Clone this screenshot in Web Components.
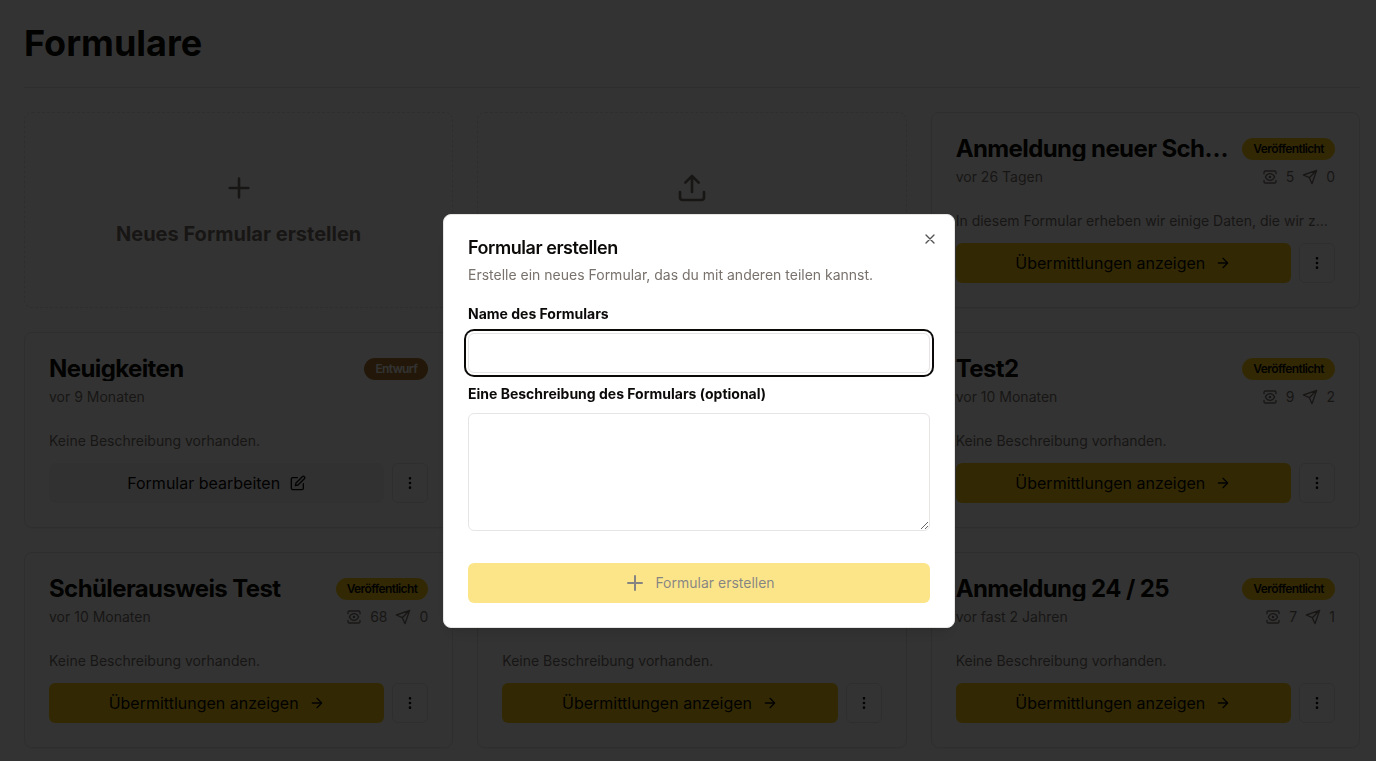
<!DOCTYPE html>
<html lang="de">
<head>
<meta charset="utf-8">
<meta name="viewport" content="width=device-width, initial-scale=1">
<title>Formulare</title>
<style>
    :root{
        --vordergrund:#0c0a09;
        --gedaempft:#78716c;
        --rand:#e7e5e4;
        --primaer:#facc15;
        --radius:6px;
    }
    body{
        margin:0;
        background:white;
        color:var(--vordergrund);
        font-family:Inter, "Liberation Sans", sans-serif;
        font-size:16px;
        line-height:24px;
    }
</style>
</head>
<body>
<formular-seite>
    <aktion-kachel icon="plus">Neues Formular erstellen</aktion-kachel>
    <aktion-kachel icon="upload"></aktion-kachel>
    <formular-karte titel="Anmeldung neuer Schüler" datum="vor 26 Tagen" aufrufe="5" antworten="0">In diesem Formular erheben wir einige Daten, die wir zur Anmeldung brauchen.</formular-karte>
    <formular-karte titel="Neuigkeiten" datum="vor 9 Monaten" entwurf>Keine Beschreibung vorhanden.</formular-karte>
    <leere-karte></leere-karte>
    <formular-karte titel="Test2" datum="vor 10 Monaten" aufrufe="9" antworten="2">Keine Beschreibung vorhanden.</formular-karte>
    <formular-karte titel="Schülerausweis Test" datum="vor 10 Monaten" aufrufe="68" antworten="0">Keine Beschreibung vorhanden.</formular-karte>
    <formular-karte>Keine Beschreibung vorhanden.</formular-karte>
    <formular-karte titel="Anmeldung 24 / 25" datum="vor fast 2 Jahren" aufrufe="7" antworten="1">Keine Beschreibung vorhanden.</formular-karte>
</formular-seite>
<formular-dialog></formular-dialog>

<script>
const ICONS = {
    plus: `<path d="M5 12h14M12 5v14"/>`,
    upload: `<path d="M21 15v4a2 2 0 0 1-2 2H5a2 2 0 0 1-2-2v-4M17 8l-5-5-5 5M12 3v12"/>`,
    pfeil: `<path d="M5 12h14m-7-7 7 7-7 7"/>`,
    punkte: `<g fill="currentColor"><circle cx="12" cy="5" r="1"/><circle cx="12" cy="12" r="1"/><circle cx="12" cy="19" r="1"/></g>`,
    ansicht: `<path d="M5 12s2.5-5 7-5 7 5 7 5-2.5 5-7 5-7-5-7-5z"/><circle cx="12" cy="12" r="1"/><path d="M21 17v2a2 2 0 0 1-2 2H5a2 2 0 0 1-2-2v-2M21 7V5a2 2 0 0 0-2-2H5a2 2 0 0 0-2 2v2"/>`,
    senden: `<path d="m22 2-7 20-4-9-9-4ZM22 2 11 13"/>`,
    bearbeiten: `<path d="M11 4H4a2 2 0 0 0-2 2v14a2 2 0 0 0 2 2h14a2 2 0 0 0 2-2v-7"/><path d="M18.5 2.5a2.12 2.12 0 0 1 3 3L12 15l-4 1 1-4Z"/>`,
    schliessen: `<path d="M18 6 6 18M6 6l12 12"/>`
};

class formIcon extends HTMLElement{
    constructor(){
        super();
        this.attachShadow({ mode: "open" });
    }
    connectedCallback(){
        this.shadowRoot.innerHTML = `
        <style>
        :host{
            display:block;
            flex:none;
            width:16px;
            height:16px;
        }
        svg{
            display:block;
            width:100%;
            height:100%;
        }
        </style>
        <svg viewBox="0 0 24 24" fill="none" stroke="currentColor" stroke-width="2" stroke-linecap="round" stroke-linejoin="round" aria-hidden="true">${ICONS[this.getAttribute("name")]}</svg>
        `
    }
}

class formularSeite extends HTMLElement{
    constructor(){
        super();
        this.attachShadow({ mode: "open" });
        this.shadowRoot.innerHTML = `
        <style>
        :host{
            display:block;
            padding:24px 16px 12px 24px;
        }
        header{
            padding-bottom:24px;
            margin-bottom:24px;
            border-bottom:1px solid var(--rand);
        }
        h1{
            margin:0;
            font-size:36px;
            line-height:39px;
            font-weight:700;
        }
        main{
            display:grid;
            grid-template-columns:repeat(3, minmax(0, 1fr));
            grid-auto-rows:196px;
            gap:24px;
        }
        </style>
        <header><h1>Formulare</h1></header>
        <main><slot></slot></main>
        `
    }
}

class aktionKachel extends HTMLElement{
    constructor(){
        super();
        this.attachShadow({ mode: "open" });
    }
    connectedCallback(){
        this.shadowRoot.innerHTML = `
        <style>
        :host{
            display:grid;
        }
        button{
            display:flex;
            flex-direction:column;
            align-items:center;
            justify-content:center;
            gap:16px;
            border:1px dashed var(--rand);
            border-radius:8px;
            background:none;
            color:var(--gedaempft);
            font:inherit;
            font-size:20px;
            line-height:28px;
            font-weight:700;
        }
        form-icon{
            width:32px;
            height:32px;
        }
        span{
            min-height:28px;
        }
        </style>
        <button type="button">
            <form-icon name="${this.getAttribute("icon")}"></form-icon>
            <span><slot></slot></span>
        </button>
        `
    }
}

class leereKarte extends HTMLElement{
    constructor(){
        super();
        this.attachShadow({ mode: "open" });
        this.shadowRoot.innerHTML = `
        <style>
        :host{
            display:block;
            border:1px solid var(--rand);
            border-radius:8px;
        }
        </style>
        `
    }
}

class formularKarte extends HTMLElement{
    constructor(){
        super();
        this.attachShadow({ mode: "open" });
    }
    connectedCallback(){
        const titel = this.getAttribute("titel");
        const entwurf = this.hasAttribute("entwurf");
        const kopf = titel ? `
            <h2 class="zeile">
                <span class="titel">${titel}</span>
                <span class="badge">${entwurf ? "Entwurf" : "Veröffentlicht"}</span>
            </h2>
            <div class="zeile meta">
                <span>${this.getAttribute("datum")}</span>
                ${entwurf ? "" : `<span class="zahlen">
                    <form-icon name="ansicht"></form-icon>${this.getAttribute("aufrufe")}
                    <form-icon name="senden"></form-icon>${this.getAttribute("antworten")}
                </span>`}
            </div>` : "";
        this.shadowRoot.innerHTML = `
        <style>
        :host{
            display:flex;
            flex-direction:column;
            box-sizing:border-box;
            padding:24px;
            border:1px solid var(--rand);
            border-radius:8px;
            box-shadow:0 1px 2px rgba(0, 0, 0, .05);
        }
        .kopf{
            min-height:50px;
        }
        .zeile{
            display:flex;
            align-items:center;
            justify-content:space-between;
            gap:12px;
        }
        h2{
            margin:0;
            font-size:24px;
            line-height:24px;
            font-weight:700;
            letter-spacing:-0.025em;
        }
        .titel{
            overflow:hidden;
            text-overflow:ellipsis;
            white-space:nowrap;
        }
        .badge{
            flex:none;
            padding:3px 11px;
            border-radius:11px;
            background:${entwurf ? "#a8762a" : "var(--primaer)"};
            color:${entwurf ? "#fafaf9" : "inherit"};
            font-size:12px;
            line-height:16px;
            font-weight:600;
        }
        .meta, p{
            color:var(--gedaempft);
            font-size:14px;
            line-height:20px;
        }
        .meta{
            margin-top:6px;
        }
        .zahlen{
            display:flex;
            align-items:center;
            gap:8px;
        }
        p{
            margin:auto 0 12px;
            overflow:hidden;
            text-overflow:ellipsis;
            white-space:nowrap;
        }
        .aktionen{
            display:flex;
            gap:8px;
        }
        a, button{
            display:flex;
            align-items:center;
            justify-content:center;
            box-sizing:border-box;
            height:40px;
            border-radius:var(--radius);
            color:inherit;
            font:inherit;
        }
        a{
            flex:1;
            gap:10px;
            background:${entwurf ? "#f5f5f4" : "var(--primaer)"};
            text-decoration:none;
        }
        button{
            padding:0 9px;
            border:1px solid var(--rand);
            background:none;
        }
        </style>
        <div class="kopf">${kopf}</div>
        <p><slot></slot></p>
        <div class="aktionen">
            <a href="#">${entwurf ? "Formular bearbeiten" : "Übermittlungen anzeigen"} <form-icon name="${entwurf ? "bearbeiten" : "pfeil"}"></form-icon></a>
            <button type="button" aria-label="Menü"><form-icon name="punkte"></form-icon></button>
        </div>
        `
    }
}

class formularDialog extends HTMLElement{
    constructor(){
        super();
        this.attachShadow({ mode: "open" });
        this.shadowRoot.innerHTML = `
        <style>
        :host{
            position:fixed;
            inset:0;
            display:grid;
            place-items:center;
            padding:81px 0 0 22px;
            background:rgba(0, 0, 0, .8);
        }
        :host([hidden]){
            display:none;
        }
        section{
            position:relative;
            box-sizing:border-box;
            width:100%;
            max-width:512px;
            padding:24px;
            border:1px solid var(--rand);
            border-radius:8px;
            background:white;
            box-shadow:0 10px 15px -3px rgba(0, 0, 0, .1), 0 4px 6px -4px rgba(0, 0, 0, .1);
        }
        h2{
            margin:0 0 8px;
            font-size:18px;
            line-height:18px;
            font-weight:600;
            letter-spacing:-0.025em;
        }
        p{
            margin:0 0 16px;
            color:var(--gedaempft);
            font-size:14px;
            line-height:20px;
        }
        form{
            display:flex;
            flex-direction:column;
            font-size:14px;
            line-height:20px;
        }
        label{
            padding:3px 0 9px;
            font-weight:700;
        }
        input, textarea{
            box-sizing:border-box;
            width:100%;
            padding:8px 12px;
            border:1px solid var(--rand);
            border-radius:var(--radius);
            background:white;
            color:inherit;
            font:inherit;
        }
        input{
            height:40px;
            margin-bottom:8px;
            outline:none;
        }
        input:focus{
            box-shadow:0 0 0 2px white, 0 0 0 4px var(--vordergrund);
        }
        textarea{
            height:118px;
            margin-bottom:32px;
            resize:vertical;
        }
        .erstellen{
            display:flex;
            align-items:center;
            justify-content:center;
            gap:8px;
            height:40px;
            border:0;
            border-radius:var(--radius);
            background:var(--primaer);
            color:var(--vordergrund);
            font:inherit;
            opacity:.5;
        }
        .erstellen form-icon{
            width:24px;
            height:24px;
        }
        .schliessen{
            position:absolute;
            top:16px;
            right:16px;
            padding:0;
            border:0;
            background:none;
            color:inherit;
            opacity:.7;
        }
        </style>
        <section role="dialog" aria-modal="true" aria-labelledby="titel">
            <h2 id="titel">Formular erstellen</h2>
            <p>Erstelle ein neues Formular, das du mit anderen teilen kannst.</p>
            <form>
                <label for="name">Name des Formulars</label>
                <input id="name" type="text" autocomplete="off">
                <label for="beschreibung">Eine Beschreibung des Formulars (optional)</label>
                <textarea id="beschreibung"></textarea>
                <button class="erstellen" type="submit" disabled><form-icon name="plus"></form-icon>Formular erstellen</button>
            </form>
            <button class="schliessen" type="button" aria-label="Schließen"><form-icon name="schliessen"></form-icon></button>
        </section>
        `
    }
    connectedCallback(){
        this._name = this.shadowRoot.querySelector("#name");
        this._erstellen = this.shadowRoot.querySelector(".erstellen");
        this._name.addEventListener("input",this._pruefen.bind(this))
        this.shadowRoot.querySelector(".schliessen").addEventListener("click",this._schliessen.bind(this))
        this._name.focus();
    }
    _pruefen(){
        this._erstellen.disabled = !this._name.value;
        this._erstellen.style.opacity = this._name.value ? 1 : "";
    }
    _schliessen(){
        this.hidden = true;
    }
}

customElements.define("form-icon", formIcon)
customElements.define("formular-seite", formularSeite)
customElements.define("aktion-kachel", aktionKachel)
customElements.define("leere-karte", leereKarte)
customElements.define("formular-karte", formularKarte)
customElements.define("formular-dialog", formularDialog)
</script>
</body>
</html>
